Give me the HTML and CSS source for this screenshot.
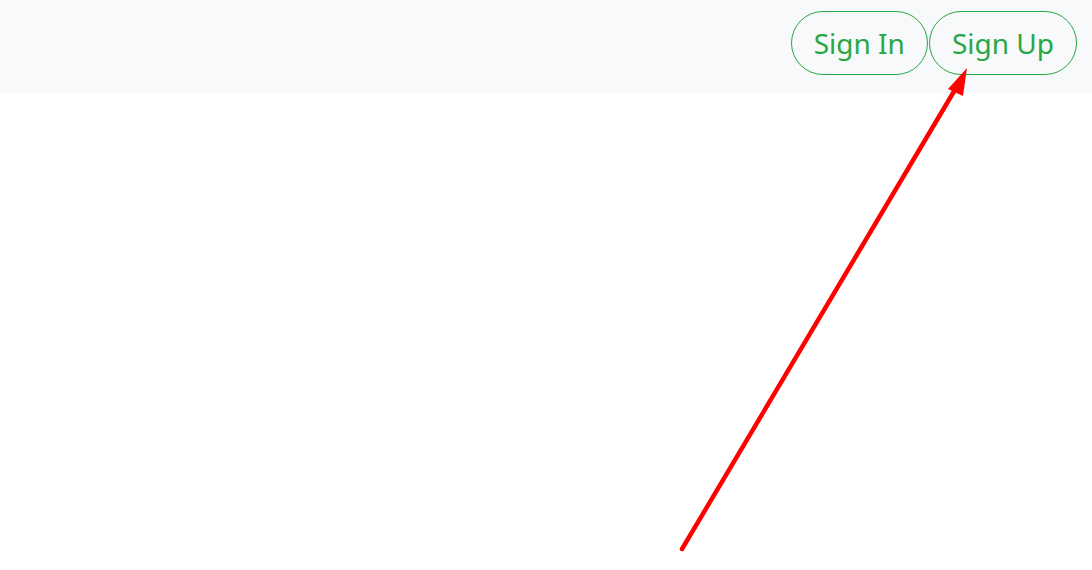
FILE: index.html
```html
<!DOCTYPE html>
<html lang="en">

<head>
    <meta charset="UTF-8">
    <meta name="viewport" content="width=device-width, initial-scale=1.0">
    <title>Sign Up</title>
    <link rel="stylesheet" href="styles.css">
</head>

<body>
    <header class="topbar">
        <nav class="auth">
            <a class="pill" href="">Sign In</a>
            <a class="pill" href="">Sign Up</a>
        </nav>
    </header>
    <svg class="pointer" width="1092" height="570" viewBox="0 0 1092 570">
        <line x1="682" y1="549" x2="956" y2="88" stroke="#ff0000" stroke-width="4.5" stroke-linecap="round"/>
        <polygon points="967,68 948,89 963,96" fill="#ff0000"/>
    </svg>
</body>

</html>
```

FILE: styles.css
```css
body {
    margin: 0;
    background: #ffffff;
    font-family: 'Noto Sans', 'Open Sans', Arial, sans-serif;
}

.topbar {
    background: #f8f9fa;
    height: 93px;
    box-sizing: border-box;
    padding: 11px 15px 0;
    display: flex;
    justify-content: flex-end;
}

.auth {
    display: flex;
    gap: 1px;
    align-items: flex-start;
}

.pill {
    display: block;
    font-size: 28px;
    line-height: 38px;
    padding: 12px 22px;
    color: #28a745;
    text-decoration: none;
    border: 1px solid #28a745;
    border-radius: 40px;
}

.pointer {
    position: absolute;
    left: 0;
    top: 0;
    pointer-events: none;
}
```
